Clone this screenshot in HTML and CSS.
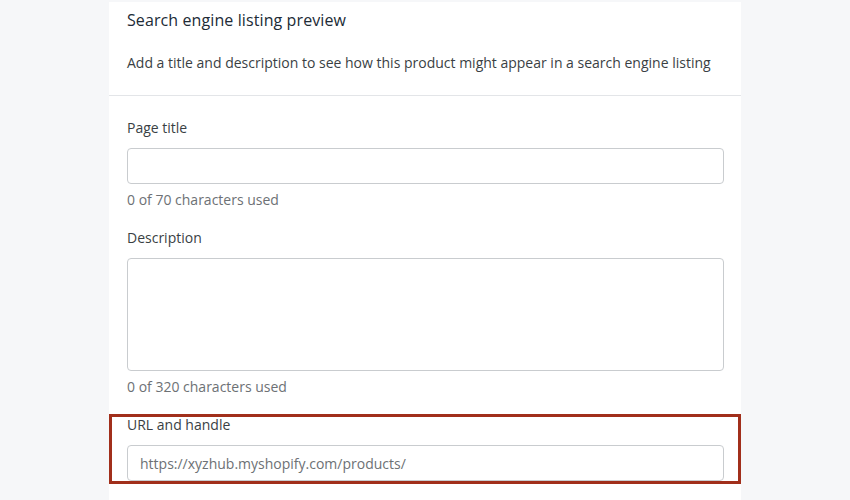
FILE: index.html
```html
<!DOCTYPE html>
<html>
<head>
<meta charset="utf-8">
<link rel="stylesheet" href="styles.css">
</head>
<body>
<div class="page">
  <div class="card">
    <div class="section head">
      <h2 class="title">Search engine listing preview</h2>
      <p class="intro">Add a title and description to see how this product might appear in a search engine listing</p>
    </div>
    <div class="section body">
      <div class="field">
        <label class="label">Page title</label>
        <div class="input"></div>
        <div class="help">0 of 70 characters used</div>
      </div>
      <div class="field">
        <label class="label">Description</label>
        <div class="input textarea"></div>
        <div class="help">0 of 320 characters used</div>
      </div>
      <div class="field url">
        <label class="label">URL and handle</label>
        <div class="input"><span class="prefix">https://xyzhub.myshopify.com/products/</span></div>
        <div class="highlight"></div>
      </div>
    </div>
  </div>
</div>
</body>
</html>
```
FILE: styles.css
```css
html, body {
  margin: 0;
  padding: 0;
  background: #f6f7f9;
}
body {
  font-family: "Open Sans", "Noto Sans", sans-serif;
  color: #212b36;
  width: 850px;
  height: 500px;
  overflow: hidden;
}
.page {
  padding-top: 2px;
  display: flex;
  justify-content: center;
}
.card {
  width: 632px;
  background: #fff;
  height: 498px;
}
.section {
  padding: 0 18px;
}
.head {
  border-bottom: 1px solid #e3e5e8;
  padding-top: 8px;
  padding-bottom: 22px;
}
.title {
  margin: 0;
  font-size: 16px;
  font-weight: 400;
  line-height: 20px;
  color: #212b36;
  letter-spacing: 0.1px;
}
.intro {
  margin: 23px 0 0 0;
  font-size: 14px;
  line-height: 20px;
  color: #3a3f44;
  letter-spacing: 0;
}
.body {
  padding-top: 22px;
}
.field {
  display: flex;
  flex-direction: column;
  margin-bottom: 18px;
}
.label {
  font-size: 14px;
  line-height: 20px;
  color: #3a3f44;
  margin-bottom: 10px;
  letter-spacing: 0;
}
.input {
  height: 36px;
  box-sizing: border-box;
  border: 1px solid #c9cccf;
  border-radius: 4px;
  display: flex;
  align-items: center;
  padding: 0 12px;
  margin-right: -1px;
}
.textarea {
  height: 113px;
}
.help {
  margin-top: 6px;
  font-size: 14px;
  line-height: 20px;
  color: #6d7175;
  letter-spacing: 0;
}
.prefix {
  font-size: 14px;
  color: #6d7175;
  letter-spacing: 0;
}
.url {
  position: relative;
}
.highlight {
  position: absolute;
  left: -18px;
  right: -18px;
  top: -1px;
  height: 70px;
  box-sizing: border-box;
  border: 3px solid #a12f1b;
}
```
